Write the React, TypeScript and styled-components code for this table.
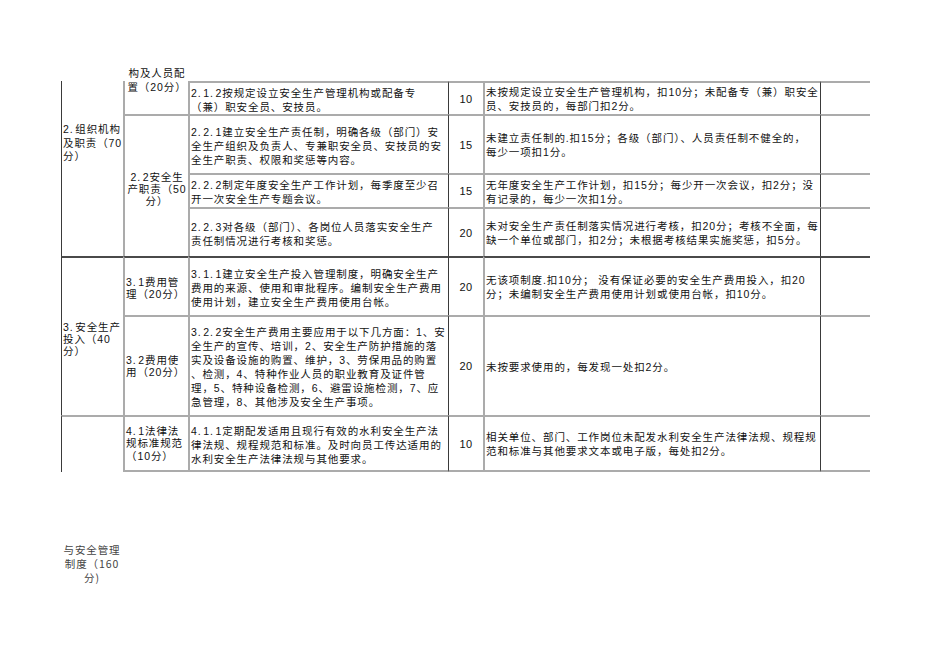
import React from 'react';
import styled, { createGlobalStyle } from 'styled-components';

const GlobalStyle = createGlobalStyle`
  html, body {
    margin: 0;
    padding: 0;
    background: #fff;
  }
  body {
    font-family: "Liberation Sans", "Noto Sans CJK SC", sans-serif;
    color: #111;
  }
`;

type Edge = 'none' | 'thin' | 'thick';
type Side = 'dark' | 'gray';

const edge = (e: Edge) =>
  e === 'thick' ? '2px solid #4a4a4a' : e === 'thin' ? '2px solid #ababab' : 'none';
const side = (s: Side) => (s === 'dark' ? '1px solid #3a3a3a' : '2px solid #ababab');

const Page = styled.div`
  width: 950px;
  height: 672px;
  box-sizing: border-box;
  padding: 81px 0 0 61px;
  overflow: hidden;
`;

const Sheet = styled.div`
  display: grid;
  grid-template-columns: 62px 65px 260px 35px 337px 50px;
  grid-template-rows: 33px 59px 34px 49px 59px 100px 57px;
  width: 809px;
`;

const Cell = styled.div<{
  $side: Side;
  $top: Edge;
  $span?: number;
  $bottom?: boolean;
  $center?: boolean;
  $valign?: 'start' | 'center' | 'end';
  $lh?: number;
  $pt?: number;
  $pb?: number;
}>`
  box-sizing: border-box;
  grid-row: span ${(p) => p.$span ?? 1};
  display: flex;
  flex-direction: column;
  justify-content: ${(p) =>
    p.$valign === 'start' ? 'flex-start' : p.$valign === 'end' ? 'flex-end' : 'center'};
  border-left: ${(p) => side(p.$side)};
  border-top: ${(p) => edge(p.$top)};
  border-bottom: ${(p) => (p.$bottom ? '2px solid #ababab' : 'none')};
  padding: ${(p) => p.$pt ?? 0}px 0 ${(p) => p.$pb ?? 0}px 1px;
  font-size: 10.5px;
  line-height: ${(p) => p.$lh ?? 14}px;
  letter-spacing: 0.9px;
  white-space: nowrap;
  text-align: ${(p) => (p.$center ? 'center' : 'left')};
  min-width: 0;
`;

const Score = styled(Cell)`
  font-size: 11px;
  letter-spacing: 0.4px;
  text-align: center;
  padding-left: 0;
`;

const Line = styled.div``;

// dots in clause numbers ("2.1.2") are set wide in the source sheet
const Dot = styled.span`
  letter-spacing: 2.6px;
`;

const Note = styled.div`
  width: 62px;
  margin-top: 71px;
  font-family: "Noto Sans CJK SC", sans-serif;
  font-size: 10.5px;
  line-height: 14px;
  letter-spacing: 0.9px;
  color: #444;
  text-align: center;
  white-space: nowrap;
`;

const spaced = (t: string) => {
  const m = t.match(/^(\d[\d.]*\.\d?)(.*)$/);
  if (!m) return t;
  const parts = m[1].split('.');
  return (
    <>
      {parts.map((p, i) => (
        <React.Fragment key={i}>
          {p}
          {i < parts.length - 1 && <Dot>.</Dot>}
        </React.Fragment>
      ))}
      {m[2]}
    </>
  );
};

const Lines = ({ items }: { items: string[] }) => (
  <>
    {items.map((t, i) => (
      <Line key={i}>{spaced(t)}</Line>
    ))}
  </>
);

interface Item {
  code: string[];
  score: string;
  rule: string[];
  top: Edge;
  last?: boolean;
}

const items: Item[] = [
  {
    code: ['2.1.2按规定设立安全生产管理机构或配备专', '（兼）职安全员、安技员。'],
    score: '10',
    rule: ['未按规定设立安全生产管理机构，扣10分；未配备专（兼）职安全', '员、安技员的，每部门扣2分。'],
    top: 'thin',
  },
  {
    code: [
      '2.2.1建立安全生产责任制，明确各级（部门）安',
      '全生产组织及负责人、专兼职安全员、安技员的安',
      '全生产职责、权限和奖惩等内容。',
    ],
    score: '15',
    rule: ['未建立责任制的.扣15分；各级（部门）、人员责任制不健全的，', '每少一项扣1分。'],
    top: 'thin',
  },
  {
    code: ['2.2.2制定年度安全生产工作计划，每季度至少召', '开一次安全生产专题会议。'],
    score: '15',
    rule: ['无年度安全生产工作计划，扣15分；每少开一次会议，扣2分；没', '有记录的，每少一次扣1分。'],
    top: 'thin',
  },
  {
    code: ['2.2.3对各级（部门）、各岗位人员落实安全生产', '责任制情况进行考核和奖惩。'],
    score: '20',
    rule: ['未对安全生产责任制落实情况进行考核，扣20分；考核不全面，每', '缺一个单位或部门，扣2分；未根据考核结果实施奖惩，扣5分。'],
    top: 'thin',
  },
  {
    code: [
      '3.1.1建立安全生产投入管理制度，明确安全生产',
      '费用的来源、使用和审批程序。编制安全生产费用',
      '使用计划，建立安全生产费用使用台帐。',
    ],
    score: '20',
    rule: ['无该项制度.扣10分；  没有保证必要的安全生产费用投入，扣20', '分；未编制安全生产费用使用计划或使用台帐，扣10分。'],
    top: 'thick',
  },
  {
    code: [
      '3.2.2安全生产费用主要应用于以下几方面：1、安',
      '全生产的宣传、培训，2、安全生产防护措施的落',
      '实及设备设施的购置、维护，3、劳保用品的购置',
      '、检测，4、特种作业人员的职业教育及证件管',
      '理，5、特种设备检测，6、避雷设施检测，7、应',
      '急管理，8、其他涉及安全生产事项。',
    ],
    score: '20',
    rule: ['未按要求使用的，每发现一处扣2分。'],
    top: 'thin',
  },
  {
    code: [
      '4.1.1定期配发适用且现行有效的水利安全生产法',
      '律法规、规程规范和标准。及时向员工传达适用的',
      '水利安全生产法律法规与其他要求。',
    ],
    score: '10',
    rule: ['相关单位、部门、工作岗位未配发水利安全生产法律法规、规程规', '范和标准与其他要求文本或电子版，每处扣2分。'],
    top: 'thin',
    last: true,
  },
];

// leading cells (first two columns) that start on a given row
const lead: Record<number, React.ReactNode> = {
  0: (
    <>
      <Cell $side="dark" $top="none" $span={4} $valign="start" $pt={42} $lh={13.5}>
        <Lines items={['2.组织机构', '及职责（70', '分）']} />
      </Cell>
      <Cell $side="gray" $top="none" $center $valign="end" $pb={20}>
        <Lines items={['构及人员配', '置（20分）']} />
      </Cell>
    </>
  ),
  1: (
    <Cell $side="gray" $top="thin" $span={3} $center $pt={6} $lh={12}>
      <Lines items={['2.2安全生', '产职责（50', '分）']} />
    </Cell>
  ),
  4: (
    <>
      <Cell $side="dark" $top="thick" $span={2} $lh={12} $pt={4}>
        <Lines items={['3.安全生产', '投入（40', '分）']} />
      </Cell>
      <Cell $side="gray" $top="thick" $lh={12.5} $pt={3}>
        <Lines items={['3.1费用管', '理（20分）']} />
      </Cell>
    </>
  ),
  5: (
    <Cell $side="gray" $top="thin" $lh={12.5}>
      <Lines items={['3.2费用使', '用（20分）']} />
    </Cell>
  ),
  6: (
    <>
      <Cell $side="dark" $top="thin" />
      <Cell $side="gray" $top="thin" $bottom $lh={12.5}>
        <Lines items={['4.1法律法', '规标准规范', '（10分）']} />
      </Cell>
    </>
  ),
};

function App() {
  return (
    <Page>
      <GlobalStyle />
      <Sheet>
        {items.map((it, i) => (
          <React.Fragment key={i}>
            {lead[i]}
            <Cell $side="gray" $top={it.top} $bottom={it.last} $pt={2}>
              <Lines items={it.code} />
            </Cell>
            <Score $side="dark" $top={it.top} $bottom={it.last}>
              {it.score}
            </Score>
            <Cell $side="gray" $top={it.top} $bottom={it.last} $pt={1}>
              <Lines items={it.rule} />
            </Cell>
            <Cell $side="dark" $top={it.top} $bottom={it.last} />
          </React.Fragment>
        ))}
      </Sheet>
      <Note>
        <Lines items={['与安全管理', '制度（160', '分)']} />
      </Note>
    </Page>
  );
}

export default App;
